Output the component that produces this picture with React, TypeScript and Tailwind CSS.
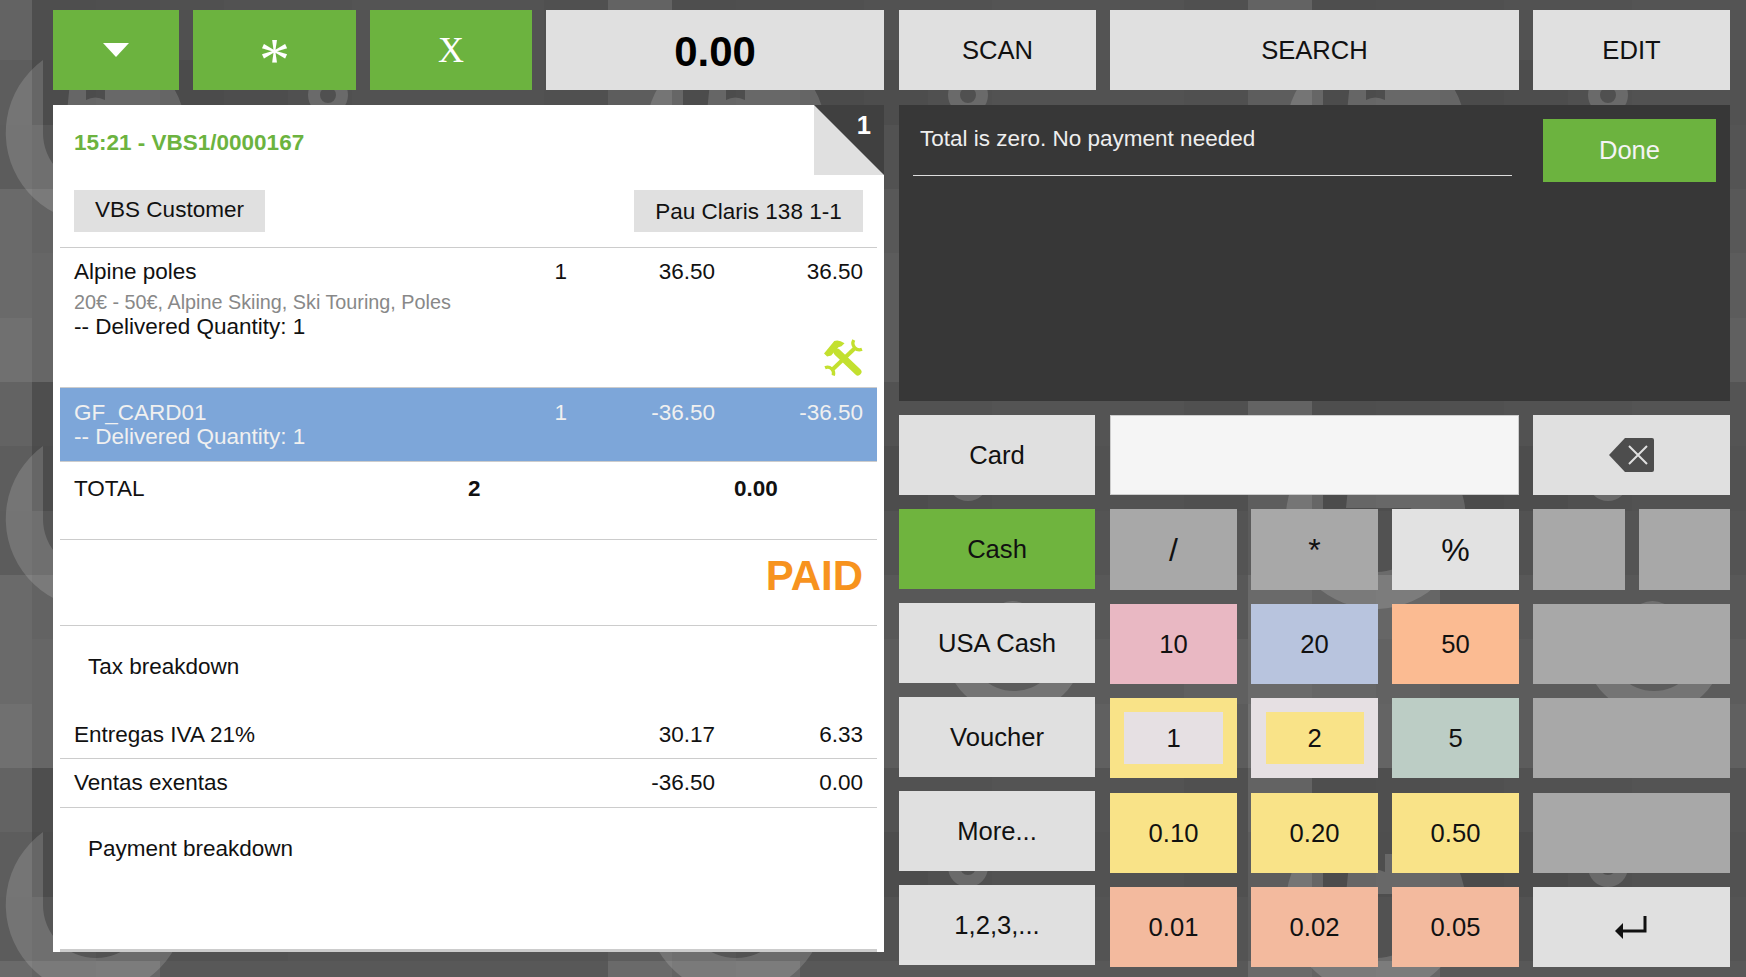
const TILES = [
  ["#4e4e4e", "#4f4f4f", "#505050", "#525252", "#525252", "#545454", "#545454", "#535353", "#505050", "#636363"],
  ["#4c4c4c", "#4e4e4e", "#4b4b4b", "#4d4d4d", "#505050", "#525252", "#525252", "#525252", "#505050", "#5d5d5d"],
  ["#565656", "#525252", "#525252", "#525252", "#545454", "#545454", "#545454", "#545454", "#545454", "#5c5c5c"],
  ["#636363", "#666666", "#585858", "#585858", "#585858", "#585858", "#585858", "#585858", "#585858", "#6a6a6a"],
  ["#666666", "#626262", "#5c5c5c", "#5c5c5c", "#5c5c5c", "#5c5c5c", "#5c5c5c", "#5c5c5c", "#606060", "#6a6a6a"],
  ["#666666", "#646464", "#606060", "#5c5c5c", "#5c5c5c", "#5c5c5c", "#606060", "#5a5a5a", "#5c5c5c", "#707070"],
];

const COLS = Array.from({ length: 29 }, (_, i) => i - 1);
const ROWS = Array.from({ length: 17 }, (_, i) => i);
const OFFSETS_X = [0, 640, 1280];
const OFFSETS_Y = [0, 386, 772];

function Background() {
  return (
    <svg className="absolute inset-0 -z-10 h-full w-full" aria-hidden="true">
      <g shapeRendering="crispEdges">
        {ROWS.map((r) =>
          COLS.map((c) => (
            <rect
              key={`${r}-${c}`}
              x={32 + c * 64}
              y={Math.round(-4 + r * 64.33)}
              width="64"
              height="65"
              fill={TILES[r % 6][(c + 10) % 10]}
            />
          ))
        )}
      </g>
      <g fill="#fff" fillOpacity="0.15" fillRule="evenodd">
        {OFFSETS_Y.map((y) =>
          OFFSETS_X.map((x) => (
            <g key={`${x}-${y}`} transform={`translate(${x} ${y})`}>
              <path d="M43 60A90 90 0 1 0 170 82L70 82L66 122L130 122L149 133A53 53 0 0 1 43 133ZM86 82L105 82L105 100Q95 95 86 100Z" />
              <path d="M308 95A20 20 0 0 0 348 95A20 20 0 0 0 308 95ZM320 95A8 8 0 0 1 336 95A8 8 0 0 1 320 95Z" />
              <path d="M304 259A70 70 0 0 0 444 259L420 259A46 46 0 0 1 328 259ZM350 226Q372 204 396 226Z" />
            </g>
          ))
        )}
      </g>
    </svg>
  );
}

function ToolsIcon() {
  return (
    <svg width="40" height="38" viewBox="0 0 39 37" fill="none">
      <path d="M9 30L31 9" stroke="#c3e02f" strokeWidth="4" />
      <path d="M30 1A6.4 6.4 0 0 0 38 10M2 28A6 6 0 0 1 10 35.5" stroke="#c3e02f" strokeWidth="3.2" />
      <path d="M14 13L34 32" stroke="#c3e02f" strokeWidth="7" strokeLinecap="round" />
      <path d="M1 14L11 2Q15 0 21 4L18 7L15 8L8 16L4 17Z" fill="#c3e02f" />
    </svg>
  );
}

function BackspaceIcon() {
  return (
    <svg width="45" height="34" viewBox="0 0 45 34">
      <path d="M0 17L16 0H43Q45 0 45 2V32Q45 34 43 34H16Z" fill="#4d4d4d" />
      <path d="M20 8L38 26M38 8L20 26" stroke="#e0e0e0" strokeWidth="2" />
    </svg>
  );
}

function EnterIcon() {
  return (
    <svg className="mr-[2px]" width="32" height="23" viewBox="0 0 32 23">
      <path d="M30 0V15H6" fill="none" stroke="#111" strokeWidth="3" />
      <path d="M0 15L8 7V23Z" fill="#111" />
    </svg>
  );
}

const LABELS = ["Card", "Cash", "USA Cash", "Voucher", "More...", "1,2,3,..."];

function Key({ bg, className = "", children }: { bg: string; className?: string; children?: React.ReactNode }) {
  return (
    <div className={`flex items-center justify-center text-[25.6px] text-[#111] ${bg} ${className}`}>
      {children}
    </div>
  );
}

function Amounts({ qty, price, total }: { qty?: string; price: string; total: string }) {
  return (
    <>
      <span className="w-[60px] text-right">{qty}</span>
      <span className="w-[148px] text-right">{price}</span>
      <span className="w-[148px] text-right">{total}</span>
    </>
  );
}

export default function App() {
  return (
    <div className="relative isolate flex h-[977px] w-[1746px] gap-[15px] overflow-hidden pl-[53px] pt-[10px] font-['Liberation_Sans',sans-serif] text-[22.5px] text-[#111]">
      <Background />

      {/* Ticket column */}
      <div className="flex w-[831px] flex-col gap-[15px]">
        <div className="flex h-20 gap-[14px]">
          <div className="flex w-[126px] items-center justify-center bg-[#6cb33f]">
            <div className="h-[14px] w-[26px] bg-white [clip-path:polygon(0_0,100%_0,50%_100%)]" />
          </div>
          <div className="flex w-[163px] items-center justify-center bg-[#6cb33f] pt-[17px] font-['Liberation_Serif',serif] text-[62px] leading-none text-white">*</div>
          <div className="flex w-[162px] items-center justify-center bg-[#6cb33f] font-['Liberation_Serif',serif] text-[36px] text-white">X</div>
          <div className="flex w-[338px] items-center justify-center bg-[#e0e0e0] pt-[3px] text-[42px] font-bold text-black">0.00</div>
        </div>

        <div className="relative flex h-[847px] flex-col bg-white">
          <div className="absolute right-0 top-0 h-[70px] w-[70px] bg-[#e0e0e0]" />
          <div className="absolute right-0 top-0 h-[70px] w-[70px] bg-[#404040] [clip-path:polygon(0_0,100%_0,100%_100%)]" />
          <span className="absolute right-[13px] top-[1px] text-[25.6px] font-bold text-white">1</span>

          <div className="flex h-[85px] items-center pb-[10px] pl-[21px] font-bold text-[#6cb33f]">15:21 - VBS1/0000167</div>
          <div className="flex h-[42px] justify-between px-[21px]">
            <div className="flex w-[191px] items-center justify-center bg-[#e0e0e0] pb-[2px]">VBS Customer</div>
            <div className="flex w-[229px] items-center justify-center bg-[#e0e0e0] pt-[2px]">Pau Claris 138 1-1</div>
          </div>

          <div className="mx-[7px] mt-[15px] flex flex-col">
            <div className="h-[140px] border-t border-[#ccc] px-[14px] pt-[11px] leading-[25px]">
              <div className="flex">
                <span className="flex-1">Alpine poles</span>
                <Amounts qty="1" price="36.50" total="36.50" />
              </div>
              <div className="mt-[6px] text-[19.8px] text-[#888]">20€ - 50€, Alpine Skiing, Ski Touring, Poles</div>
              <div className="-mt-px">-- Delivered Quantity: 1</div>
              <div className="flex justify-end">
                <ToolsIcon />
              </div>
            </div>

            <div className="h-[75px] border-y border-[#ccc] bg-[#7da6d9] px-[14px] pt-[12px] leading-[25px] text-[#f0f0f0]">
              <div className="flex">
                <span className="flex-1">GF_CARD01</span>
                <Amounts qty="1" price="-36.50" total="-36.50" />
              </div>
              <div className="-mt-px">-- Delivered Quantity: 1</div>
            </div>

            <div className="flex h-[78px] border-b border-[#ccc] px-[14px] pt-[14px] leading-[25px]">
              <span className="w-[394px]">TOTAL</span>
              <span className="w-[120px] font-bold">2</span>
              <span className="font-bold">
                <span className="ml-[146px]">0.00</span>
              </span>
            </div>

            <div className="flex h-[86px] items-center justify-end border-b border-[#ccc] px-[14px] pb-[14px] text-[42px] font-bold text-[#f7931e]">PAID</div>

            <div className="h-[85px] px-[28px] pt-[28px] leading-[25px]">Tax breakdown</div>
            <div className="flex h-[48px] items-start border-b border-[#ccc] px-[14px] pt-[11px] leading-[25px]">
              <span className="flex-1">Entregas IVA 21%</span>
              <Amounts price="30.17" total="6.33" />
            </div>
            <div className="flex h-[49px] items-start border-b border-[#ccc] px-[14px] pt-[11px] leading-[25px]">
              <span className="flex-1">Ventas exentas</span>
              <Amounts price="-36.50" total="0.00" />
            </div>
            <div className="h-[144px] border-b-[3px] border-[#ccc] px-[28px] pt-[28px] leading-[25px]">Payment breakdown</div>
          </div>
        </div>
      </div>

      {/* Payment column */}
      <div className="flex w-[831px] flex-col">
        <div className="flex h-20 gap-[14px] text-[25.6px]">
          <div className="flex w-[197px] items-center justify-center bg-[#e0e0e0]">SCAN</div>
          <div className="flex w-[409px] items-center justify-center bg-[#e0e0e0]">SEARCH</div>
          <div className="flex w-[197px] items-center justify-center bg-[#e0e0e0]">EDIT</div>
        </div>

        <div className="mt-[15px] flex h-[296px] justify-between bg-[#373737] pl-[14px] pr-[14px] pt-[14px]">
          <div className="h-[57px] w-[599px] border-b border-[#ddd] pl-[7px] leading-[25px] text-[#eee]">
            <div className="pt-[7px]">Total is zero. No payment needed</div>
          </div>
          <div className="flex h-[63px] w-[173px] items-center justify-center bg-[#6cb33f] text-[25.6px] text-[#f4f4f4]">Done</div>
        </div>

        <div className="mt-[14px] flex gap-[15px]">
          <div className="flex w-[196px] flex-col gap-[14px]">
            {LABELS.map((label) => (
              <Key key={label} bg={label === "Cash" ? "bg-[#6fb43e]" : "bg-[#e0e0e0]"} className="h-20">
                {label}
              </Key>
            ))}
          </div>

          <div className="grid grid-cols-[127px_127px_127px_92px_91px] grid-rows-[80px_81px_80px_81px_80px_80px] gap-x-[14px] gap-y-[14px]">
            <div className="col-span-3 border border-[#ccc] bg-[#f5f5f5]" />
            <Key bg="bg-[#e0e0e0]" className="col-span-2"><BackspaceIcon /></Key>

            <Key bg="bg-[#a8a8a8]" className="text-[32px]">/</Key>
            <Key bg="bg-[#a8a8a8]" className="text-[32px]">*</Key>
            <Key bg="bg-[#e2e2e2]" className="text-[32px]">%</Key>
            <Key bg="bg-[#a8a8a8]" />
            <Key bg="bg-[#a8a8a8]" />

            <Key bg="bg-[#e9b8c3]">10</Key>
            <Key bg="bg-[#b8c4de]">20</Key>
            <Key bg="bg-[#fbbb92]">50</Key>
            <Key bg="bg-[#a8a8a8]" className="col-span-2" />

            <Key bg="bg-[#f9e388]" className="h-20">
              <div className="flex h-[52px] w-[99px] items-center justify-center bg-[#e6e0e3]">1</div>
            </Key>
            <Key bg="bg-[#e6e0e3]" className="h-20">
              <div className="flex h-[52px] w-[98px] items-center justify-center bg-[#f9e388]">2</div>
            </Key>
            <Key bg="bg-[#bccdc5]" className="h-20">5</Key>
            <Key bg="bg-[#a8a8a8]" className="col-span-2 h-20" />

            <Key bg="bg-[#f9e388]">0.10</Key>
            <Key bg="bg-[#f9e388]">0.20</Key>
            <Key bg="bg-[#f9e388]">0.50</Key>
            <Key bg="bg-[#a8a8a8]" className="col-span-2" />

            <Key bg="bg-[#f3ba9e]">0.01</Key>
            <Key bg="bg-[#f3ba9e]">0.02</Key>
            <Key bg="bg-[#f3ba9e]">0.05</Key>
            <Key bg="bg-[#e0e0e0]" className="col-span-2"><EnterIcon /></Key>
          </div>
        </div>
      </div>
    </div>
  );
}
